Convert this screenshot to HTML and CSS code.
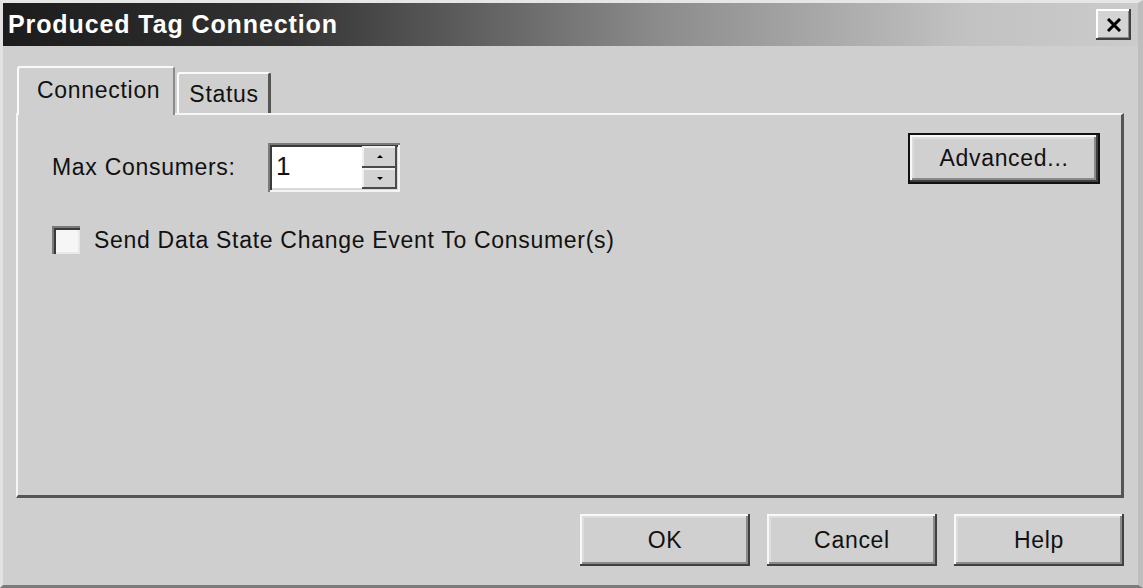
FILE: index.html
```html
<!DOCTYPE html>
<html lang="en">
<head>
    <meta charset="UTF-8">
    <title>Produced Tag Connection</title>
    <link rel="stylesheet" href="styles.css">
</head>
<body>
    <div class="window">
        <div class="titlebar">
            <span class="title">Produced Tag Connection</span>
            <button class="close-btn" aria-label="Close">
                <svg width="16" height="14" viewBox="0 0 16 14">
                    <path d="M2 1 L14 13 M14 1 L2 13" stroke="#000" stroke-width="3"/>
                </svg>
            </button>
        </div>

        <div class="content">
            <div class="tabs">
                <div class="tab active">Connection</div>
                <div class="tab">Status</div>
            </div>

            <div class="panel">
                <div class="row-top">
                    <div class="field">
                        <label class="label">Max Consumers:</label>
                        <div class="spin">
                            <span class="spin-value">1</span>
                            <div class="spin-buttons">
                                <div class="spin-btn"><span class="arrow up"></span></div>
                                <div class="spin-btn"><span class="arrow down"></span></div>
                            </div>
                        </div>
                    </div>
                    <button class="btn btn-default">Advanced...</button>
                </div>

                <div class="check-row">
                    <span class="checkbox"></span>
                    <span class="check-label">Send Data State Change Event To Consumer(s)</span>
                </div>
            </div>

            <div class="footer">
                <button class="btn">OK</button>
                <button class="btn">Cancel</button>
                <button class="btn">Help</button>
            </div>
        </div>
    </div>
</body>
</html>
```

FILE: styles.css
```css
body {
    margin: 0;
    background: #d0d0d0;
    font-family: "Liberation Sans", Arial, sans-serif;
    color: #111;
}

.window {
    width: 1143px;
    height: 588px;
    box-sizing: border-box;
    background: #cfcfcf;
    border-top: 3px solid #e6e6e6;
    border-left: 3px solid #e2e2e2;
    border-right: 5px solid #bdbdbd;
    border-bottom: 3px solid #7a7a7a;
    display: flex;
    flex-direction: column;
}

.titlebar {
    height: 43px;
    display: flex;
    align-items: center;
    justify-content: space-between;
    padding: 0 7px 0 5px;
    background: linear-gradient(to right, #1c1c1c 0%, #333 25%, #8c8c8c 58%, #c2c2c2 85%, #cbcbcb 100%);
}

.title {
    color: #fff;
    font-weight: bold;
    font-size: 25px;
    letter-spacing: 0.9px;
}

.close-btn {
    width: 35px;
    height: 31px;
    padding: 0;
    border: none;
    background: #d4d4d4;
    box-shadow: inset -2px -2px #404040, inset 2px 2px #fff, inset -3px -3px #8a8a8a;
    display: flex;
    align-items: center;
    justify-content: center;
}

.content {
    flex: 1;
    display: flex;
    flex-direction: column;
    padding: 20px 14px 0 13px;
}

.tabs {
    display: flex;
    align-items: flex-end;
    padding-left: 1px;
    height: 49px;
    margin-bottom: -2px;
    position: relative;
    z-index: 1;
}

.tab {
    font-size: 23px;
    letter-spacing: 0.7px;
    padding: 0 9px 0 10px;
    height: 41px;
    line-height: 40px;
    box-sizing: border-box;
    border-top: 2px solid #fafafa;
    border-left: 2px solid #fafafa;
    border-right: 3px solid #555;
    border-radius: 3px 3px 0 0;
    background: #cfcfcf;
    margin-bottom: 2px;
}

.tab.active {
    height: 49px;
    line-height: 44px;
    padding: 0 13px 0 18px;
    margin-bottom: 0;
    margin-right: 2px;
    border-right: 2px solid #8a8a8a;
}

.panel {
    height: 385px;
    box-sizing: border-box;
    border-top: 2px solid #f6f6f6;
    border-left: 2px solid #f6f6f6;
    border-right: 3px solid #555;
    border-bottom: 3px solid #555;
    padding: 18px 21px 0 34px;
}

.row-top {
    display: flex;
    justify-content: space-between;
    align-items: flex-start;
}

.field {
    display: flex;
    align-items: center;
    margin-top: 10px;
}

.label {
    font-size: 23px;
    letter-spacing: 0.7px;
    width: 216px;
}

.spin {
    width: 132px;
    height: 49px;
    box-sizing: border-box;
    background: #fff;
    box-shadow: inset 2px 2px #7a7a7a, inset -2px -2px #f4f4f4, inset 4px 4px #3a3a3a, inset -4px -4px #d8d8d8;
    display: flex;
    justify-content: space-between;
    padding: 3px 3px 3px 8px;
}

.spin-value {
    font-size: 26px;
    line-height: 40px;
}

.spin-buttons {
    width: 35px;
    display: flex;
    flex-direction: column;
}

.spin-btn {
    flex: 1;
    background: #d2d2d2;
    box-shadow: inset -2px -2px #4a4a4a, inset 2px 2px #f0f0f0;
    display: flex;
    align-items: center;
    justify-content: center;
}

.arrow {
    width: 0;
    height: 0;
    border-left: 3px solid transparent;
    border-right: 3px solid transparent;
}

.arrow.up {
    border-bottom: 3px solid #000;
}

.arrow.down {
    border-top: 3px solid #000;
}

.btn {
    font-family: "Liberation Sans", Arial, sans-serif;
    font-size: 23px;
    letter-spacing: 0.7px;
    color: #111;
    width: 170px;
    height: 52px;
    padding: 0;
    border: none;
    background: #d0d0d0;
    box-shadow: inset -2px -2px #404040, inset 2px 2px #f8f8f8, inset -4px -4px #8a8a8a, inset 4px 4px #dcdcdc;
}

.btn-default {
    width: 192px;
    height: 51px;
    border: 2px solid #111;
    box-sizing: border-box;
}

.check-row {
    display: flex;
    align-items: center;
    margin-top: 34px;
}

.checkbox {
    width: 28px;
    height: 28px;
    box-sizing: border-box;
    background: #f6f6f6;
    box-shadow: inset 2px 2px #7a7a7a, inset 4px 4px #3a3a3a, inset -2px -2px #e8e8e8;
    margin-right: 14px;
}

.check-label {
    font-size: 23px;
    letter-spacing: 0.7px;
}

.footer {
    display: flex;
    justify-content: flex-end;
    gap: 17px;
    padding-top: 16px;
}
```
